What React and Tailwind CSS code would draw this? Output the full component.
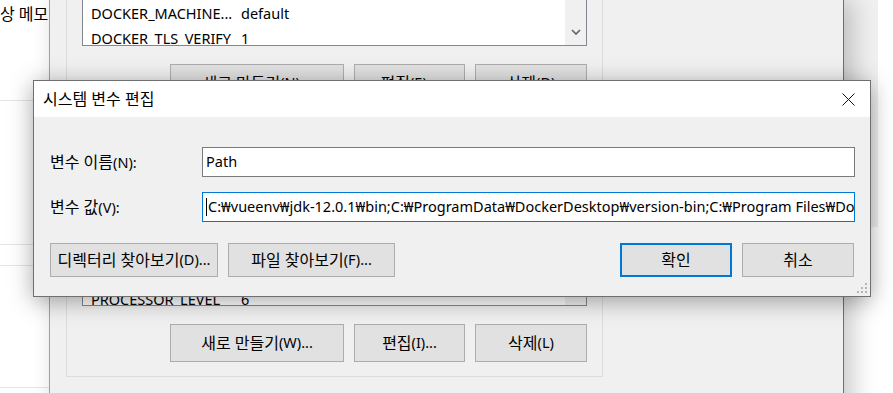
const font = { fontFamily: '"Segoe UI", "Noto Sans", "Noto Sans CJK KR", sans-serif' };

// Hangul runs render a bit larger, like Malgun Gothic next to Segoe UI
function T({ children }) {
  const parts = String(children).split(/([\uAC00-\uD7A3][\uAC00-\uD7A3 ]*)/);
  return (
    <>
      {parts.map((p, i) =>
        /[\uAC00-\uD7A3]/.test(p) ? (
          <span key={i} className="text-[16px]">
            {p}
          </span>
        ) : (
          <span key={i}>{p}</span>
        ),
      )}
    </>
  );
}

function WinButton({ children, className = '', border = 'border border-[#adadad]' }) {
  return (
    <div
      className={`flex items-center justify-center bg-[#e1e1e1] ${border} text-[14.5px] text-black whitespace-nowrap ${className}`}
    >
      <T>{children}</T>
    </div>
  );
}

function BackWindow() {
  return (
    <div className="absolute left-[49px] top-0 w-[795px] h-[420px] bg-[#f0f0f0] border-l border-[#a0a0a0] border-r border-r-[#6f6f6f] shadow-[8px_0_24px_rgba(0,0,0,0.22)]">
      <div className="ml-[16px] w-[537px] h-[377px] border-x border-b border-[#dcdcdc] flex flex-col px-[15px]">
        <div className="relative h-[46px] bg-white border-x border-b border-[#828790] overflow-hidden">
          <div className="pl-[8px] pt-[1px] text-[14.5px] leading-[24px]">
            <div className="flex">
              <span className="w-[150px]">DOCKER_MACHINE...</span>
              <span>default</span>
            </div>
            <div className="flex mt-[1px]">
              <span className="w-[150px]">DOCKER_TLS_VERIFY</span>
              <span>1</span>
            </div>
          </div>
          <div className="absolute right-0 top-0 bottom-0 w-[21px] bg-[#f0f0f0] flex items-end justify-center pb-[10px]">
            <svg width="10" height="6" viewBox="0 0 10 6">
              <polyline points="1,1 5,5 9,1" fill="none" stroke="#606060" strokeWidth="1.6" />
            </svg>
          </div>
        </div>
        <div className="mt-[18px] flex justify-end gap-[10px]">
          <WinButton className="w-[174px] h-[38px]">새로 만들기(N)...</WinButton>
          <WinButton className="w-[111px] h-[38px]">편집(E)...</WinButton>
          <WinButton className="w-[112px] h-[38px]">삭제(D)</WinButton>
        </div>
        <div className="relative mt-[28px] h-[176px] bg-white border border-[#828790] overflow-hidden">
          <div className="absolute left-[8px] bottom-[-6px] flex text-[14.5px] leading-[23px]">
            <span className="w-[150px]">PROCESSOR_LEVEL</span>
            <span>6</span>
          </div>
          <div className="absolute right-0 top-0 bottom-0 w-[21px] bg-[#f0f0f0]" />
        </div>
        <div className="mt-[18px] flex justify-end gap-[10px]">
          <WinButton className="w-[174px] h-[38px]">새로 만들기(W)...</WinButton>
          <WinButton className="w-[111px] h-[38px]">편집(I)...</WinButton>
          <WinButton className="w-[112px] h-[38px]">삭제(L)</WinButton>
        </div>
      </div>
    </div>
  );
}

function LeftWindow() {
  return (
    <div className="absolute left-0 top-0 w-[49px] h-[393px] bg-white overflow-hidden">
      <div className="absolute right-[-14px] top-[3px] whitespace-nowrap text-[16px] leading-[22px]">
        상 메모리
      </div>
      <div className="absolute left-0 right-0 top-[100px] h-px bg-[#e5e5e5]" />
      <div className="absolute left-0 right-0 top-[244px] h-px bg-[#e5e5e5]" />
      <div className="absolute left-0 right-0 top-[265px] h-px bg-[#e5e5e5]" />
      <div className="absolute left-0 right-0 top-[387px] h-px bg-[#e5e5e5]" />
    </div>
  );
}

function ResizeGrip() {
  const dots = [
    [8, 0],
    [4, 4],
    [8, 4],
    [0, 8],
    [4, 8],
    [8, 8],
  ];
  return (
    <svg className="absolute right-[3px] bottom-[3px]" width="10" height="10" viewBox="0 0 10 10">
      {dots.map(([x, y]) => (
        <rect key={`${x}-${y}`} x={x} y={y} width="2" height="2" fill="#b4b4b4" />
      ))}
    </svg>
  );
}

function EditDialog() {
  return (
    <div className="absolute left-[33px] top-[80px] w-[838px] h-[217px] border border-[#6f6f6f] bg-[#f0f0f0] shadow-[0_4px_22px_rgba(0,0,0,0.35)] flex flex-col text-[14.5px]">
      <div className="h-[36px] bg-white flex items-center justify-between pl-[9px] pr-[15px]">
        <span className="text-black">
          <T>시스템 변수 편집</T>
        </span>
        <svg width="13" height="13" viewBox="0 0 13 13">
          <line x1="0.5" y1="0.5" x2="12.5" y2="12.5" stroke="#111" strokeWidth="1" />
          <line x1="12.5" y1="0.5" x2="0.5" y2="12.5" stroke="#111" strokeWidth="1" />
        </svg>
      </div>
      <div className="relative flex-1 pt-[30px] pl-[16px] pr-[15px] flex flex-col">
        <div className="flex items-center">
          <span className="w-[152px]">
            <T>변수 이름(N):</T>
          </span>
          <div className="flex-1 h-[30px] bg-white border border-[#7a7a7a] flex items-center pl-[3px]">
            Path
          </div>
        </div>
        <div className="mt-[15px] flex items-center">
          <span className="w-[152px]">
            <T>변수 값(V):</T>
          </span>
          <div className="flex-1 h-[30px] bg-white border border-[#0078d7] flex items-center pl-[3px] overflow-hidden whitespace-nowrap">
            <span className="w-px h-[18px] bg-black mr-[1px] shrink-0" />
            C:₩vueenv₩jdk-12.0.1₩bin;C:₩ProgramData₩DockerDesktop₩version-bin;C:₩Program Files₩Docker₩Docker₩resources₩bin
          </div>
        </div>
        <div className="mt-[21px] flex items-center">
          <WinButton className="w-[168px] h-[34px]">디렉터리 찾아보기(D)...</WinButton>
          <WinButton className="ml-[10px] w-[167px] h-[34px]">파일 찾아보기(F)...</WinButton>
          <WinButton className="ml-auto w-[112px] h-[34px]" border="border-2 border-[#0078d7]">
            확인
          </WinButton>
          <WinButton className="ml-[10px] mr-[1px] w-[112px] h-[34px]">취소</WinButton>
        </div>
        <ResizeGrip />
      </div>
    </div>
  );
}

export default function App() {
  return (
    <div className="relative w-[893px] h-[393px] overflow-hidden bg-white text-black" style={font}>
      <div className="absolute left-[843px] top-0 w-[35px] h-[227px] bg-[#f0f0f0]" />
      <LeftWindow />
      <BackWindow />
      <EditDialog />
    </div>
  );
}
